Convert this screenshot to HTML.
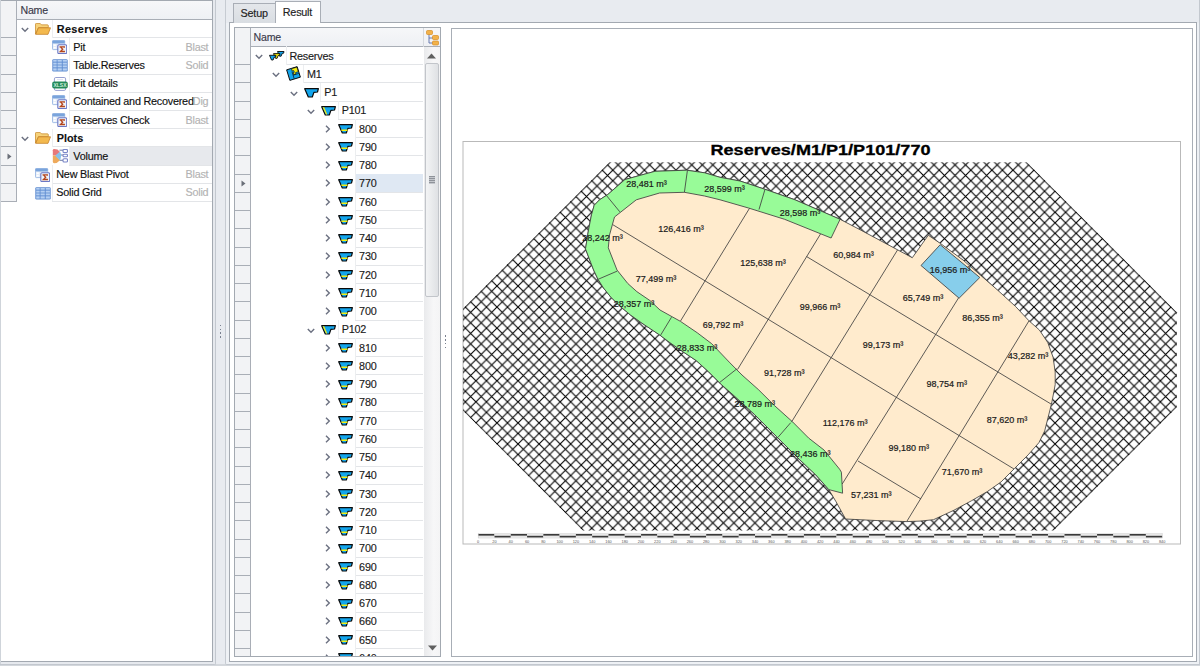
<!DOCTYPE html>
<html><head><meta charset="utf-8"><style>
html,body{margin:0;padding:0;}
body{width:1200px;height:666px;overflow:hidden;position:relative;background:#e8ebf0;font-family:"Liberation Sans",sans-serif;font-size:11px;color:#1e1e1e;}
.a{position:absolute;}
.t{position:absolute;white-space:nowrap;line-height:1;letter-spacing:-0.22px;-webkit-text-stroke:0.15px currentColor;}
</style></head><body>
<div class="a" style="left:0;top:664px;width:1200px;height:2px;background:#d3d7dc"></div><div class="a" style="left:0;top:0;width:216px;height:664.5px;background:#e6e9ee;box-sizing:border-box;border-right:1px solid #c3c8cf;border-bottom:1px solid #c3c8cf;border-bottom-right-radius:2px"></div><div class="a" style="left:0;top:0;width:213px;height:662px;background:#fff;box-sizing:border-box;border:1px solid #a3a9b1;border-left-color:#a3a9b1"></div><div class="a" style="left:0;top:0;width:1px;height:664px;background:#cfd4da"></div><div class="a" style="left:1px;top:1px;width:211px;height:18.5px;background:linear-gradient(#f6f7f9,#eef0f4)"></div><div class="a" style="left:1px;top:19px;width:211px;height:1px;background:#a9aeb6"></div><div class="a" style="left:1px;top:1px;width:15.5px;height:201px;background:#f2f3f5"></div><div class="a" style="left:16px;top:1px;width:1px;height:201px;background:#a9aeb6"></div><div class="t" style="left:20.5px;top:4.9px;font-size:10.6px;color:#3a3a4a">Name</div><div class="a" style="left:1px;top:37.20px;width:15.5px;height:1px;background:#a9aeb6"></div><div class="a" style="left:51.8px;top:37.20px;width:160.2px;height:1px;background:#e3e5e8"></div><div class="a" style="left:51.8px;top:19.50px;width:1px;height:18.20px;background:#eceef0"></div><svg style="position:absolute;left:21.0px;top:27.0px" width="8" height="6" viewBox="0 0 8 6"><path d="M0.8 1 L4 4.3 L7.2 1" fill="none" stroke="#6b7080" stroke-width="1.4"/></svg><div class="a" style="left:34.8px;top:23.10px;line-height:0"><svg width="16" height="12" viewBox="0 0 16 13" preserveAspectRatio="none"><path d="M0.5 1.2 Q0.5 0.5 1.2 0.5 L5.2 0.5 L6.5 2 L12.5 2 Q13.3 2 13.3 2.8 L13.3 5 L3.5 5 L0.5 12 Z" fill="#f6d27a" stroke="#c98a2e" stroke-width="0.8"/><path d="M0.7 12.3 L3.4 5.2 L15.5 5.2 L13 12.3 Z" fill="#f3b94e" stroke="#c47f24" stroke-width="0.8"/></svg></div><div class="t" style="left:56.8px;top:23.50px;font-size:10.8px;font-weight:bold;color:#111;letter-spacing:0.38px;">Reserves</div><div class="a" style="left:1px;top:55.40px;width:15.5px;height:1px;background:#a9aeb6"></div><div class="a" style="left:69.2px;top:55.40px;width:142.8px;height:1px;background:#e3e5e8"></div><div class="a" style="left:69.2px;top:37.70px;width:1px;height:18.20px;background:#eceef0"></div><div class="a" style="left:52.2px;top:40.10px;line-height:0"><svg width="15" height="14" viewBox="0 0 15 14"><rect x="0.5" y="0.4" width="12.2" height="9.2" rx="0.8" fill="#e6eef9" stroke="#8fb0e0" stroke-width="0.8"/><rect x="0.5" y="0.4" width="12.2" height="3" rx="0.8" fill="#7aa4dc"/><rect x="1.6" y="4.4" width="2.2" height="1.6" fill="#fff"/><rect x="1.6" y="7" width="2.2" height="1.6" fill="#fff"/><rect x="5.8" y="4.8" width="8.9" height="8.8" rx="1.2" fill="#eef3fa" stroke="#6c78c4" stroke-width="1.1"/><path d="M8.2 7.6 L8.2 6.9 L12.3 6.9 L12.3 7.7 M8.4 6.9 L10.7 9.2 L8.4 11.5 L12.3 11.5 L12.3 10.7" fill="none" stroke="#b5451b" stroke-width="1.3"/></svg></div><div class="t" style="left:73.3px;top:41.70px;font-size:10.8px;font-weight:normal;color:#111;">Pit</div><div class="t" style="right:991.6px;top:41.70px;font-size:10.8px;color:#b3b3b3">Blast</div><div class="a" style="left:1px;top:73.60px;width:15.5px;height:1px;background:#a9aeb6"></div><div class="a" style="left:69.2px;top:73.60px;width:142.8px;height:1px;background:#e3e5e8"></div><div class="a" style="left:69.2px;top:55.90px;width:1px;height:18.20px;background:#eceef0"></div><div class="a" style="left:52.2px;top:59.30px;line-height:0"><svg width="16" height="13" viewBox="0 0 16 13"><rect x="0.3" y="0.2" width="15.4" height="12.4" rx="1.3" fill="#5d8bd0"/><rect x="1.2" y="1.0" width="3.5" height="1.7" fill="#b4cff2"/><rect x="1.2" y="3.6" width="3.5" height="2.0" fill="#b4cff2"/><rect x="1.2" y="6.4" width="3.5" height="2.0" fill="#b4cff2"/><rect x="1.2" y="9.3" width="3.5" height="2.3" fill="#b4cff2"/><rect x="5.5" y="1.0" width="4.3" height="1.7" fill="#b4cff2"/><rect x="5.5" y="3.6" width="4.3" height="2.0" fill="#b4cff2"/><rect x="5.5" y="6.4" width="4.3" height="2.0" fill="#b4cff2"/><rect x="5.5" y="9.3" width="4.3" height="2.3" fill="#b4cff2"/><rect x="10.7" y="1.0" width="4.2" height="1.7" fill="#b4cff2"/><rect x="10.7" y="3.6" width="4.2" height="2.0" fill="#b4cff2"/><rect x="10.7" y="6.4" width="4.2" height="2.0" fill="#b4cff2"/><rect x="10.7" y="9.3" width="4.2" height="2.3" fill="#b4cff2"/></svg></div><div class="t" style="left:73.3px;top:59.90px;font-size:10.8px;font-weight:normal;color:#111;">Table.Reserves</div><div class="t" style="right:991.6px;top:59.90px;font-size:10.8px;color:#b3b3b3">Solid</div><div class="a" style="left:1px;top:91.80px;width:15.5px;height:1px;background:#a9aeb6"></div><div class="a" style="left:69.2px;top:91.80px;width:142.8px;height:1px;background:#e3e5e8"></div><div class="a" style="left:69.2px;top:74.10px;width:1px;height:18.20px;background:#eceef0"></div><div class="a" style="left:52.2px;top:76.60px;line-height:0"><svg width="16" height="14" viewBox="0 0 16 14"><rect x="2.4" y="0.5" width="11.2" height="12.9" rx="1.4" fill="#fff" stroke="#8a95cc" stroke-width="0.9"/><line x1="5" y1="2.6" x2="11" y2="2.6" stroke="#c9cfe8" stroke-width="0.6"/><rect x="0.2" y="4.6" width="15.6" height="6.8" rx="2" fill="#23895a"/><text x="8" y="10.1" font-size="5.4" font-family="Liberation Sans" font-weight="bold" fill="#cfeedd" text-anchor="middle" textLength="13" lengthAdjust="spacingAndGlyphs">XLSX</text></svg></div><div class="t" style="left:73.3px;top:78.10px;font-size:10.8px;font-weight:normal;color:#111;">Pit details</div><div class="a" style="left:1px;top:110.00px;width:15.5px;height:1px;background:#a9aeb6"></div><div class="a" style="left:69.2px;top:110.00px;width:142.8px;height:1px;background:#e3e5e8"></div><div class="a" style="left:69.2px;top:92.30px;width:1px;height:18.20px;background:#eceef0"></div><div class="a" style="left:52.2px;top:94.70px;line-height:0"><svg width="15" height="14" viewBox="0 0 15 14"><rect x="0.5" y="0.4" width="12.2" height="9.2" rx="0.8" fill="#e6eef9" stroke="#8fb0e0" stroke-width="0.8"/><rect x="0.5" y="0.4" width="12.2" height="3" rx="0.8" fill="#7aa4dc"/><rect x="1.6" y="4.4" width="2.2" height="1.6" fill="#fff"/><rect x="1.6" y="7" width="2.2" height="1.6" fill="#fff"/><rect x="5.8" y="4.8" width="8.9" height="8.8" rx="1.2" fill="#eef3fa" stroke="#6c78c4" stroke-width="1.1"/><path d="M8.2 7.6 L8.2 6.9 L12.3 6.9 L12.3 7.7 M8.4 6.9 L10.7 9.2 L8.4 11.5 L12.3 11.5 L12.3 10.7" fill="none" stroke="#b5451b" stroke-width="1.3"/></svg></div><div class="t" style="left:73.3px;top:96.30px;font-size:10.8px;font-weight:normal;color:#111;">Contained and Recovered</div><div class="t" style="right:991.6px;top:96.30px;font-size:10.8px;color:#b3b3b3">Dig</div><div class="a" style="left:1px;top:128.20px;width:15.5px;height:1px;background:#a9aeb6"></div><div class="a" style="left:69.2px;top:128.20px;width:142.8px;height:1px;background:#e3e5e8"></div><div class="a" style="left:69.2px;top:110.50px;width:1px;height:18.20px;background:#eceef0"></div><div class="a" style="left:52.2px;top:112.90px;line-height:0"><svg width="15" height="14" viewBox="0 0 15 14"><rect x="0.5" y="0.4" width="12.2" height="9.2" rx="0.8" fill="#e6eef9" stroke="#8fb0e0" stroke-width="0.8"/><rect x="0.5" y="0.4" width="12.2" height="3" rx="0.8" fill="#7aa4dc"/><rect x="1.6" y="4.4" width="2.2" height="1.6" fill="#fff"/><rect x="1.6" y="7" width="2.2" height="1.6" fill="#fff"/><rect x="5.8" y="4.8" width="8.9" height="8.8" rx="1.2" fill="#eef3fa" stroke="#6c78c4" stroke-width="1.1"/><path d="M8.2 7.6 L8.2 6.9 L12.3 6.9 L12.3 7.7 M8.4 6.9 L10.7 9.2 L8.4 11.5 L12.3 11.5 L12.3 10.7" fill="none" stroke="#b5451b" stroke-width="1.3"/></svg></div><div class="t" style="left:73.3px;top:114.50px;font-size:10.8px;font-weight:normal;color:#111;">Reserves Check</div><div class="t" style="right:991.6px;top:114.50px;font-size:10.8px;color:#b3b3b3">Blast</div><div class="a" style="left:1px;top:146.40px;width:15.5px;height:1px;background:#a9aeb6"></div><div class="a" style="left:51.8px;top:146.40px;width:160.2px;height:1px;background:#e3e5e8"></div><div class="a" style="left:51.8px;top:128.70px;width:1px;height:18.20px;background:#eceef0"></div><svg style="position:absolute;left:21.0px;top:136.2px" width="8" height="6" viewBox="0 0 8 6"><path d="M0.8 1 L4 4.3 L7.2 1" fill="none" stroke="#6b7080" stroke-width="1.4"/></svg><div class="a" style="left:34.8px;top:132.30px;line-height:0"><svg width="16" height="12" viewBox="0 0 16 13" preserveAspectRatio="none"><path d="M0.5 1.2 Q0.5 0.5 1.2 0.5 L5.2 0.5 L6.5 2 L12.5 2 Q13.3 2 13.3 2.8 L13.3 5 L3.5 5 L0.5 12 Z" fill="#f6d27a" stroke="#c98a2e" stroke-width="0.8"/><path d="M0.7 12.3 L3.4 5.2 L15.5 5.2 L13 12.3 Z" fill="#f3b94e" stroke="#c47f24" stroke-width="0.8"/></svg></div><div class="t" style="left:56.8px;top:132.70px;font-size:10.8px;font-weight:bold;color:#111;letter-spacing:0px;">Plots</div><div class="a" style="left:1px;top:164.60px;width:15.5px;height:1px;background:#a9aeb6"></div><div class="a" style="left:69.2px;top:147.10px;width:142.8px;height:17.70px;background:#e7e9ed"></div><svg class="a" style="left:7px;top:153.40px" width="5" height="7" viewBox="0 0 5 7"><path d="M0.5 0.5 L4.5 3.5 L0.5 6.5 Z" fill="#6a6f78"/></svg><div class="a" style="left:69.2px;top:164.60px;width:142.8px;height:1px;background:#e3e5e8"></div><div class="a" style="left:69.2px;top:146.90px;width:1px;height:18.20px;background:#eceef0"></div><div class="a" style="left:52.2px;top:148.90px;line-height:0"><svg width="16" height="15" viewBox="0 0 16 15"><path d="M7.5 1.2 L11 1.2 M8.2 6.0 L11 6.0 M7.5 11.3 L11 11.3" stroke="#4a5a8a" stroke-width="0.8"/><path d="M0.8 1.2 Q0.8 0 2.2 0 L5.5 0.5 L8 3 L4 6.6 L0.8 6.6 Z" fill="#e7787a"/><path d="M0.8 6.6 L4 6.6 L8 11.2 Q5.5 14.2 2.2 14.2 Q0.8 14.2 0.8 12.8 Z" fill="#eeaa5c"/><path d="M3.2 6.8 L8 2.6 Q10 6.8 8 11.4 Z" fill="#86c0ea"/><rect x="11" y="0.5" width="4.5" height="3" rx="1" fill="#fff" stroke="#7a86c8" stroke-width="1.1"/><rect x="11" y="5.2" width="4.5" height="2.6" rx="1" fill="#fff" stroke="#7a86c8" stroke-width="1.1"/><rect x="11" y="9.8" width="4.5" height="3.2" rx="1" fill="#fff" stroke="#7a86c8" stroke-width="1.1"/></svg></div><div class="t" style="left:73.3px;top:150.90px;font-size:10.8px;font-weight:normal;color:#111;">Volume</div><div class="a" style="left:1px;top:182.80px;width:15.5px;height:1px;background:#a9aeb6"></div><div class="a" style="left:51.6px;top:182.80px;width:160.4px;height:1px;background:#e3e5e8"></div><div class="a" style="left:51.6px;top:165.10px;width:1px;height:18.20px;background:#eceef0"></div><div class="a" style="left:35.2px;top:167.50px;line-height:0"><svg width="15" height="14" viewBox="0 0 15 14"><rect x="0.5" y="0.4" width="12.2" height="9.2" rx="0.8" fill="#e6eef9" stroke="#8fb0e0" stroke-width="0.8"/><rect x="0.5" y="0.4" width="12.2" height="3" rx="0.8" fill="#7aa4dc"/><rect x="1.6" y="4.4" width="2.2" height="1.6" fill="#fff"/><rect x="1.6" y="7" width="2.2" height="1.6" fill="#fff"/><rect x="5.8" y="4.8" width="8.9" height="8.8" rx="1.2" fill="#eef3fa" stroke="#6c78c4" stroke-width="1.1"/><path d="M8.2 7.6 L8.2 6.9 L12.3 6.9 L12.3 7.7 M8.4 6.9 L10.7 9.2 L8.4 11.5 L12.3 11.5 L12.3 10.7" fill="none" stroke="#b5451b" stroke-width="1.3"/></svg></div><div class="t" style="left:56.3px;top:169.10px;font-size:10.8px;font-weight:normal;color:#111;">New Blast Pivot</div><div class="t" style="right:991.6px;top:169.10px;font-size:10.8px;color:#b3b3b3">Blast</div><div class="a" style="left:1px;top:201.00px;width:15.5px;height:1px;background:#a9aeb6"></div><div class="a" style="left:51.6px;top:201.00px;width:160.4px;height:1px;background:#e3e5e8"></div><div class="a" style="left:51.6px;top:183.30px;width:1px;height:18.20px;background:#eceef0"></div><div class="a" style="left:35.2px;top:186.70px;line-height:0"><svg width="16" height="13" viewBox="0 0 16 13"><rect x="0.3" y="0.2" width="15.4" height="12.4" rx="1.3" fill="#5d8bd0"/><rect x="1.2" y="1.0" width="3.5" height="1.7" fill="#b4cff2"/><rect x="1.2" y="3.6" width="3.5" height="2.0" fill="#b4cff2"/><rect x="1.2" y="6.4" width="3.5" height="2.0" fill="#b4cff2"/><rect x="1.2" y="9.3" width="3.5" height="2.3" fill="#b4cff2"/><rect x="5.5" y="1.0" width="4.3" height="1.7" fill="#b4cff2"/><rect x="5.5" y="3.6" width="4.3" height="2.0" fill="#b4cff2"/><rect x="5.5" y="6.4" width="4.3" height="2.0" fill="#b4cff2"/><rect x="5.5" y="9.3" width="4.3" height="2.3" fill="#b4cff2"/><rect x="10.7" y="1.0" width="4.2" height="1.7" fill="#b4cff2"/><rect x="10.7" y="3.6" width="4.2" height="2.0" fill="#b4cff2"/><rect x="10.7" y="6.4" width="4.2" height="2.0" fill="#b4cff2"/><rect x="10.7" y="9.3" width="4.2" height="2.3" fill="#b4cff2"/></svg></div><div class="t" style="left:56.3px;top:187.30px;font-size:10.8px;font-weight:normal;color:#111;">Solid Grid</div><div class="t" style="right:991.6px;top:187.30px;font-size:10.8px;color:#b3b3b3">Solid</div><div class="a" style="left:219.95px;top:324.75px;width:1.5px;height:1.5px;background:#7a8190"></div><div class="a" style="left:219.95px;top:328.60px;width:1.5px;height:1.5px;background:#7a8190"></div><div class="a" style="left:219.95px;top:332.45px;width:1.5px;height:1.5px;background:#7a8190"></div><div class="a" style="left:219.95px;top:336.30px;width:1.5px;height:1.5px;background:#7a8190"></div><div class="a" style="left:225px;top:0;width:975px;height:664.5px;background:#eef1f5;box-sizing:border-box;border-left:1px solid #c6cbd2;border-bottom:1px solid #c3c8cf;border-right:1px solid #c3c8cf;border-bottom-left-radius:2px"></div><div class="a" style="left:226px;top:0;width:973px;height:22.5px;background:#e8ebf0"></div><div class="a" style="left:229px;top:22px;width:968px;height:640px;background:#fff;box-sizing:border-box;border:1px solid #a3a9b1"></div><div class="a" style="left:233px;top:3px;width:42.5px;height:19.5px;background:linear-gradient(#e4e7eb,#d9dde2);box-sizing:border-box;border:1px solid #a9aeb6;border-bottom:none"></div><div class="t" style="left:240.6px;top:7.6px;font-size:10.8px;color:#222">Setup</div><div class="a" style="left:275px;top:1.2px;width:46px;height:22px;background:#fff;box-sizing:border-box;border:1px solid #a9aeb6;border-bottom:none"></div><div class="t" style="left:282.8px;top:7.2px;font-size:10.8px;color:#222">Result</div><div class="a" style="left:234px;top:27px;width:206.5px;height:629.5px;background:#fff;box-sizing:border-box;border:1px solid #a3a9b1;overflow:hidden"><div class="a" style="left:0;top:0;width:204.5px;height:18.5px;background:linear-gradient(#f6f7f9,#eef0f4)"></div><div class="a" style="left:0;top:17.80px;width:204.5px;height:1px;background:#a9aeb6"></div><div class="a" style="left:0;top:0;width:14.50px;height:640px;background:#f2f3f5"></div><div class="a" style="left:14.50px;top:0;width:1px;height:640px;background:#a9aeb6"></div><div class="t" style="left:18.60px;top:3.80px;font-size:10.6px;color:#3a3a4a">Name</div><div class="a" style="left:188.00px;top:0;width:1px;height:18.5px;background:#d5d9de"></div><div class="a" style="left:191.00px;top:1.50px;line-height:0"><svg width="13" height="16" viewBox="0 0 13 16"><path d="M3 4 L3 13 L7 13 M3 8 L7 8" fill="none" stroke="#5a6ea8" stroke-width="0.9"/><rect x="0.5" y="0.5" width="6" height="4" rx="1" fill="#f2b24a" stroke="#d78d22" stroke-width="0.7"/><rect x="6.5" y="5.5" width="6" height="4" rx="1" fill="#f2b24a" stroke="#d78d22" stroke-width="0.7"/><rect x="6.5" y="11" width="6" height="4" rx="1" fill="#f2b24a" stroke="#d78d22" stroke-width="0.7"/></svg></div><div class="a" style="left:0;top:36.05px;width:14.50px;height:1px;background:#a9aeb6"></div><div class="a" style="left:50.50px;top:36.05px;width:137.50px;height:1px;background:#e3e5e8"></div><div class="a" style="left:50.50px;top:18.30px;width:1px;height:18.25px;background:#eceef0"></div><svg style="position:absolute;left:20.0px;top:26.099999999999998px" width="8" height="6" viewBox="0 0 8 6"><path d="M0.8 1 L4 4.3 L7.2 1" fill="none" stroke="#6b7080" stroke-width="1.4"/></svg><div class="a" style="left:33.60px;top:22.90px;line-height:0"><svg width="16" height="11" viewBox="0 0 16 11"><path transform="translate(8,0)" d="M0.5 0.5 L7 0.5 L6.6 2.2 L5.2 2.4 L4.1 5.2 L2.5 5.2 Z" fill="#12a5ec" stroke="#0a0a0a" stroke-width="0.9" stroke-linejoin="round"/><path transform="translate(4,2.1)" d="M0.5 0.5 L7 0.5 L6.6 2.2 L5.2 2.4 L4.1 5.2 L2.5 5.2 Z" fill="#f4ee10" stroke="#0a0a0a" stroke-width="0.9" stroke-linejoin="round"/><path transform="translate(0,3.8)" d="M0.5 0.5 L7 0.5 L6.6 2.2 L5.2 2.4 L4.1 5.2 L2.5 5.2 Z" fill="#12a5ec" stroke="#0a0a0a" stroke-width="0.9" stroke-linejoin="round"/></svg></div><div class="t" style="left:54.50px;top:22.60px;font-size:10.8px;color:#1a1a1a">Reserves</div><div class="a" style="left:0;top:54.30px;width:14.50px;height:1px;background:#a9aeb6"></div><div class="a" style="left:67.90px;top:54.30px;width:120.10px;height:1px;background:#e3e5e8"></div><div class="a" style="left:67.90px;top:36.55px;width:1px;height:18.25px;background:#eceef0"></div><svg style="position:absolute;left:37.39999999999998px;top:44.349999999999994px" width="8" height="6" viewBox="0 0 8 6"><path d="M0.8 1 L4 4.3 L7.2 1" fill="none" stroke="#6b7080" stroke-width="1.4"/></svg><div class="a" style="left:50.80px;top:38.45px;line-height:0"><svg width="15" height="15" viewBox="0 0 15 15"><g transform="rotate(-17 7.5 7.5)"><rect x="2" y="2" width="11" height="11" fill="#12a5ec" stroke="#0a0a0a" stroke-width="0.9"/><path d="M7 2.4 L12.6 2.4 L12.6 7.2 L9.8 7.2 L9.8 8.6 L7.4 8.6 L7.4 6.6 L8.6 6.6 L8.6 4.8 L7 4.8 Z" fill="#f4ee10" stroke="#0a0a0a" stroke-width="0.6"/><path d="M6.6 5.2 L6.6 12.6 M6.6 9 L12.6 9" stroke="#0a0a0a" stroke-width="0.6"/></g></svg></div><div class="t" style="left:71.90px;top:40.85px;font-size:10.8px;color:#1a1a1a">M1</div><div class="a" style="left:0;top:72.55px;width:14.50px;height:1px;background:#a9aeb6"></div><div class="a" style="left:85.30px;top:72.55px;width:102.70px;height:1px;background:#e3e5e8"></div><div class="a" style="left:85.30px;top:54.80px;width:1px;height:18.25px;background:#eceef0"></div><svg style="position:absolute;left:54.80000000000001px;top:62.599999999999994px" width="8" height="6" viewBox="0 0 8 6"><path d="M0.8 1 L4 4.3 L7.2 1" fill="none" stroke="#6b7080" stroke-width="1.4"/></svg><div class="a" style="left:68.60px;top:59.60px;line-height:0"><svg width="15" height="10" viewBox="0 0 15 10"><path d="M0.7 0.7 L14.4 0.7 L13.5 4.0 L9.9 4.4 L8.3 9.0 L4.3 9.0 Z" fill="#12a5ec" stroke="#0a0a0a" stroke-width="1.2" stroke-linejoin="round"/></svg></div><div class="t" style="left:89.30px;top:59.10px;font-size:10.8px;color:#1a1a1a">P1</div><div class="a" style="left:0;top:90.80px;width:14.50px;height:1px;background:#a9aeb6"></div><div class="a" style="left:102.70px;top:90.80px;width:85.30px;height:1px;background:#e3e5e8"></div><div class="a" style="left:102.70px;top:73.05px;width:1px;height:18.25px;background:#eceef0"></div><svg style="position:absolute;left:72.19999999999999px;top:80.85px" width="8" height="6" viewBox="0 0 8 6"><path d="M0.8 1 L4 4.3 L7.2 1" fill="none" stroke="#6b7080" stroke-width="1.4"/></svg><div class="a" style="left:86.00px;top:77.85px;line-height:0"><svg width="15" height="10" viewBox="0 0 15 10"><path d="M0.7 0.7 L14.4 0.7 L13.5 4.0 L9.9 4.4 L8.3 9.0 L4.3 9.0 Z" fill="#12a5ec" stroke="#0a0a0a" stroke-width="1.2" stroke-linejoin="round"/><path d="M1.6 1.3 L3.2 1.3 L6.3 8.4 L5.0 8.4 Z" fill="#f4ee10"/></svg></div><div class="t" style="left:106.70px;top:77.35px;font-size:10.8px;color:#1a1a1a">P101</div><div class="a" style="left:0;top:109.05px;width:14.50px;height:1px;background:#a9aeb6"></div><div class="a" style="left:120.10px;top:109.05px;width:67.90px;height:1px;background:#e3e5e8"></div><div class="a" style="left:120.10px;top:91.30px;width:1px;height:18.25px;background:#eceef0"></div><svg style="position:absolute;left:90.19999999999999px;top:96.6px" width="6" height="8" viewBox="0 0 6 8"><path d="M1 0.8 L4.3 4 L1 7.2" fill="none" stroke="#6b7080" stroke-width="1.4"/></svg><div class="a" style="left:103.40px;top:96.10px;line-height:0"><svg width="15" height="10" viewBox="0 0 15 10"><path d="M0.7 0.7 L14.4 0.7 L13.5 4.0 L9.9 4.4 L8.3 9.0 L4.3 9.0 Z" fill="#12a5ec" stroke="#0a0a0a" stroke-width="1.2" stroke-linejoin="round"/><path d="M3.1 5.4 L9.8 5.4 L9.3 6.9 L3.6 6.9 Z" fill="#f4ee10"/></svg></div><div class="t" style="left:124.10px;top:95.60px;font-size:10.8px;color:#1a1a1a">800</div><div class="a" style="left:0;top:127.30px;width:14.50px;height:1px;background:#a9aeb6"></div><div class="a" style="left:120.10px;top:127.30px;width:67.90px;height:1px;background:#e3e5e8"></div><div class="a" style="left:120.10px;top:109.55px;width:1px;height:18.25px;background:#eceef0"></div><svg style="position:absolute;left:90.19999999999999px;top:114.85000000000001px" width="6" height="8" viewBox="0 0 6 8"><path d="M1 0.8 L4.3 4 L1 7.2" fill="none" stroke="#6b7080" stroke-width="1.4"/></svg><div class="a" style="left:103.40px;top:114.35px;line-height:0"><svg width="15" height="10" viewBox="0 0 15 10"><path d="M0.7 0.7 L14.4 0.7 L13.5 4.0 L9.9 4.4 L8.3 9.0 L4.3 9.0 Z" fill="#12a5ec" stroke="#0a0a0a" stroke-width="1.2" stroke-linejoin="round"/><path d="M3.1 5.4 L9.8 5.4 L9.3 6.9 L3.6 6.9 Z" fill="#f4ee10"/></svg></div><div class="t" style="left:124.10px;top:113.85px;font-size:10.8px;color:#1a1a1a">790</div><div class="a" style="left:0;top:145.55px;width:14.50px;height:1px;background:#a9aeb6"></div><div class="a" style="left:120.10px;top:145.55px;width:67.90px;height:1px;background:#e3e5e8"></div><div class="a" style="left:120.10px;top:127.80px;width:1px;height:18.25px;background:#eceef0"></div><svg style="position:absolute;left:90.19999999999999px;top:133.10000000000002px" width="6" height="8" viewBox="0 0 6 8"><path d="M1 0.8 L4.3 4 L1 7.2" fill="none" stroke="#6b7080" stroke-width="1.4"/></svg><div class="a" style="left:103.40px;top:132.60px;line-height:0"><svg width="15" height="10" viewBox="0 0 15 10"><path d="M0.7 0.7 L14.4 0.7 L13.5 4.0 L9.9 4.4 L8.3 9.0 L4.3 9.0 Z" fill="#12a5ec" stroke="#0a0a0a" stroke-width="1.2" stroke-linejoin="round"/><path d="M3.1 5.4 L9.8 5.4 L9.3 6.9 L3.6 6.9 Z" fill="#f4ee10"/></svg></div><div class="t" style="left:124.10px;top:132.10px;font-size:10.8px;color:#1a1a1a">780</div><div class="a" style="left:0;top:163.80px;width:14.50px;height:1px;background:#a9aeb6"></div><div class="a" style="left:120.10px;top:146.05px;width:67.90px;height:17.75px;background:#dfe8f3"></div><svg class="a" style="left:6px;top:152.35px" width="5" height="7" viewBox="0 0 5 7"><path d="M0.5 0.5 L4.5 3.5 L0.5 6.5 Z" fill="#6a6f78"/></svg><div class="a" style="left:120.10px;top:163.80px;width:67.90px;height:1px;background:#e3e5e8"></div><div class="a" style="left:120.10px;top:146.05px;width:1px;height:18.25px;background:#eceef0"></div><svg style="position:absolute;left:90.19999999999999px;top:151.35000000000002px" width="6" height="8" viewBox="0 0 6 8"><path d="M1 0.8 L4.3 4 L1 7.2" fill="none" stroke="#6b7080" stroke-width="1.4"/></svg><div class="a" style="left:103.40px;top:150.85px;line-height:0"><svg width="15" height="10" viewBox="0 0 15 10"><path d="M0.7 0.7 L14.4 0.7 L13.5 4.0 L9.9 4.4 L8.3 9.0 L4.3 9.0 Z" fill="#12a5ec" stroke="#0a0a0a" stroke-width="1.2" stroke-linejoin="round"/><path d="M3.1 5.4 L9.8 5.4 L9.3 6.9 L3.6 6.9 Z" fill="#f4ee10"/></svg></div><div class="t" style="left:124.10px;top:150.35px;font-size:10.8px;color:#1a1a1a">770</div><div class="a" style="left:0;top:182.05px;width:14.50px;height:1px;background:#a9aeb6"></div><div class="a" style="left:120.10px;top:182.05px;width:67.90px;height:1px;background:#e3e5e8"></div><div class="a" style="left:120.10px;top:164.30px;width:1px;height:18.25px;background:#eceef0"></div><svg style="position:absolute;left:90.19999999999999px;top:169.60000000000002px" width="6" height="8" viewBox="0 0 6 8"><path d="M1 0.8 L4.3 4 L1 7.2" fill="none" stroke="#6b7080" stroke-width="1.4"/></svg><div class="a" style="left:103.40px;top:169.10px;line-height:0"><svg width="15" height="10" viewBox="0 0 15 10"><path d="M0.7 0.7 L14.4 0.7 L13.5 4.0 L9.9 4.4 L8.3 9.0 L4.3 9.0 Z" fill="#12a5ec" stroke="#0a0a0a" stroke-width="1.2" stroke-linejoin="round"/><path d="M3.1 5.4 L9.8 5.4 L9.3 6.9 L3.6 6.9 Z" fill="#f4ee10"/></svg></div><div class="t" style="left:124.10px;top:168.60px;font-size:10.8px;color:#1a1a1a">760</div><div class="a" style="left:0;top:200.30px;width:14.50px;height:1px;background:#a9aeb6"></div><div class="a" style="left:120.10px;top:200.30px;width:67.90px;height:1px;background:#e3e5e8"></div><div class="a" style="left:120.10px;top:182.55px;width:1px;height:18.25px;background:#eceef0"></div><svg style="position:absolute;left:90.19999999999999px;top:187.85000000000002px" width="6" height="8" viewBox="0 0 6 8"><path d="M1 0.8 L4.3 4 L1 7.2" fill="none" stroke="#6b7080" stroke-width="1.4"/></svg><div class="a" style="left:103.40px;top:187.35px;line-height:0"><svg width="15" height="10" viewBox="0 0 15 10"><path d="M0.7 0.7 L14.4 0.7 L13.5 4.0 L9.9 4.4 L8.3 9.0 L4.3 9.0 Z" fill="#12a5ec" stroke="#0a0a0a" stroke-width="1.2" stroke-linejoin="round"/><path d="M3.1 5.4 L9.8 5.4 L9.3 6.9 L3.6 6.9 Z" fill="#f4ee10"/></svg></div><div class="t" style="left:124.10px;top:186.85px;font-size:10.8px;color:#1a1a1a">750</div><div class="a" style="left:0;top:218.55px;width:14.50px;height:1px;background:#a9aeb6"></div><div class="a" style="left:120.10px;top:218.55px;width:67.90px;height:1px;background:#e3e5e8"></div><div class="a" style="left:120.10px;top:200.80px;width:1px;height:18.25px;background:#eceef0"></div><svg style="position:absolute;left:90.19999999999999px;top:206.10000000000002px" width="6" height="8" viewBox="0 0 6 8"><path d="M1 0.8 L4.3 4 L1 7.2" fill="none" stroke="#6b7080" stroke-width="1.4"/></svg><div class="a" style="left:103.40px;top:205.60px;line-height:0"><svg width="15" height="10" viewBox="0 0 15 10"><path d="M0.7 0.7 L14.4 0.7 L13.5 4.0 L9.9 4.4 L8.3 9.0 L4.3 9.0 Z" fill="#12a5ec" stroke="#0a0a0a" stroke-width="1.2" stroke-linejoin="round"/><path d="M3.1 5.4 L9.8 5.4 L9.3 6.9 L3.6 6.9 Z" fill="#f4ee10"/></svg></div><div class="t" style="left:124.10px;top:205.10px;font-size:10.8px;color:#1a1a1a">740</div><div class="a" style="left:0;top:236.80px;width:14.50px;height:1px;background:#a9aeb6"></div><div class="a" style="left:120.10px;top:236.80px;width:67.90px;height:1px;background:#e3e5e8"></div><div class="a" style="left:120.10px;top:219.05px;width:1px;height:18.25px;background:#eceef0"></div><svg style="position:absolute;left:90.19999999999999px;top:224.35000000000002px" width="6" height="8" viewBox="0 0 6 8"><path d="M1 0.8 L4.3 4 L1 7.2" fill="none" stroke="#6b7080" stroke-width="1.4"/></svg><div class="a" style="left:103.40px;top:223.85px;line-height:0"><svg width="15" height="10" viewBox="0 0 15 10"><path d="M0.7 0.7 L14.4 0.7 L13.5 4.0 L9.9 4.4 L8.3 9.0 L4.3 9.0 Z" fill="#12a5ec" stroke="#0a0a0a" stroke-width="1.2" stroke-linejoin="round"/><path d="M3.1 5.4 L9.8 5.4 L9.3 6.9 L3.6 6.9 Z" fill="#f4ee10"/></svg></div><div class="t" style="left:124.10px;top:223.35px;font-size:10.8px;color:#1a1a1a">730</div><div class="a" style="left:0;top:255.05px;width:14.50px;height:1px;background:#a9aeb6"></div><div class="a" style="left:120.10px;top:255.05px;width:67.90px;height:1px;background:#e3e5e8"></div><div class="a" style="left:120.10px;top:237.30px;width:1px;height:18.25px;background:#eceef0"></div><svg style="position:absolute;left:90.19999999999999px;top:242.60000000000002px" width="6" height="8" viewBox="0 0 6 8"><path d="M1 0.8 L4.3 4 L1 7.2" fill="none" stroke="#6b7080" stroke-width="1.4"/></svg><div class="a" style="left:103.40px;top:242.10px;line-height:0"><svg width="15" height="10" viewBox="0 0 15 10"><path d="M0.7 0.7 L14.4 0.7 L13.5 4.0 L9.9 4.4 L8.3 9.0 L4.3 9.0 Z" fill="#12a5ec" stroke="#0a0a0a" stroke-width="1.2" stroke-linejoin="round"/><path d="M3.1 5.4 L9.8 5.4 L9.3 6.9 L3.6 6.9 Z" fill="#f4ee10"/></svg></div><div class="t" style="left:124.10px;top:241.60px;font-size:10.8px;color:#1a1a1a">720</div><div class="a" style="left:0;top:273.30px;width:14.50px;height:1px;background:#a9aeb6"></div><div class="a" style="left:120.10px;top:273.30px;width:67.90px;height:1px;background:#e3e5e8"></div><div class="a" style="left:120.10px;top:255.55px;width:1px;height:18.25px;background:#eceef0"></div><svg style="position:absolute;left:90.19999999999999px;top:260.85px" width="6" height="8" viewBox="0 0 6 8"><path d="M1 0.8 L4.3 4 L1 7.2" fill="none" stroke="#6b7080" stroke-width="1.4"/></svg><div class="a" style="left:103.40px;top:260.35px;line-height:0"><svg width="15" height="10" viewBox="0 0 15 10"><path d="M0.7 0.7 L14.4 0.7 L13.5 4.0 L9.9 4.4 L8.3 9.0 L4.3 9.0 Z" fill="#12a5ec" stroke="#0a0a0a" stroke-width="1.2" stroke-linejoin="round"/><path d="M3.1 5.4 L9.8 5.4 L9.3 6.9 L3.6 6.9 Z" fill="#f4ee10"/></svg></div><div class="t" style="left:124.10px;top:259.85px;font-size:10.8px;color:#1a1a1a">710</div><div class="a" style="left:0;top:291.55px;width:14.50px;height:1px;background:#a9aeb6"></div><div class="a" style="left:120.10px;top:291.55px;width:67.90px;height:1px;background:#e3e5e8"></div><div class="a" style="left:120.10px;top:273.80px;width:1px;height:18.25px;background:#eceef0"></div><svg style="position:absolute;left:90.19999999999999px;top:279.1px" width="6" height="8" viewBox="0 0 6 8"><path d="M1 0.8 L4.3 4 L1 7.2" fill="none" stroke="#6b7080" stroke-width="1.4"/></svg><div class="a" style="left:103.40px;top:278.60px;line-height:0"><svg width="15" height="10" viewBox="0 0 15 10"><path d="M0.7 0.7 L14.4 0.7 L13.5 4.0 L9.9 4.4 L8.3 9.0 L4.3 9.0 Z" fill="#12a5ec" stroke="#0a0a0a" stroke-width="1.2" stroke-linejoin="round"/><path d="M3.1 5.4 L9.8 5.4 L9.3 6.9 L3.6 6.9 Z" fill="#f4ee10"/></svg></div><div class="t" style="left:124.10px;top:278.10px;font-size:10.8px;color:#1a1a1a">700</div><div class="a" style="left:0;top:309.80px;width:14.50px;height:1px;background:#a9aeb6"></div><div class="a" style="left:102.70px;top:309.80px;width:85.30px;height:1px;background:#e3e5e8"></div><div class="a" style="left:102.70px;top:292.05px;width:1px;height:18.25px;background:#eceef0"></div><svg style="position:absolute;left:72.19999999999999px;top:299.85px" width="8" height="6" viewBox="0 0 8 6"><path d="M0.8 1 L4 4.3 L7.2 1" fill="none" stroke="#6b7080" stroke-width="1.4"/></svg><div class="a" style="left:86.00px;top:296.85px;line-height:0"><svg width="15" height="10" viewBox="0 0 15 10"><path d="M0.7 0.7 L14.4 0.7 L13.5 4.0 L9.9 4.4 L8.3 9.0 L4.3 9.0 Z" fill="#12a5ec" stroke="#0a0a0a" stroke-width="1.2" stroke-linejoin="round"/><path d="M1.6 1.3 L3.2 1.3 L6.3 8.4 L5.0 8.4 Z" fill="#f4ee10"/></svg></div><div class="t" style="left:106.70px;top:296.35px;font-size:10.8px;color:#1a1a1a">P102</div><div class="a" style="left:0;top:328.05px;width:14.50px;height:1px;background:#a9aeb6"></div><div class="a" style="left:120.10px;top:328.05px;width:67.90px;height:1px;background:#e3e5e8"></div><div class="a" style="left:120.10px;top:310.30px;width:1px;height:18.25px;background:#eceef0"></div><svg style="position:absolute;left:90.19999999999999px;top:315.6px" width="6" height="8" viewBox="0 0 6 8"><path d="M1 0.8 L4.3 4 L1 7.2" fill="none" stroke="#6b7080" stroke-width="1.4"/></svg><div class="a" style="left:103.40px;top:315.10px;line-height:0"><svg width="15" height="10" viewBox="0 0 15 10"><path d="M0.7 0.7 L14.4 0.7 L13.5 4.0 L9.9 4.4 L8.3 9.0 L4.3 9.0 Z" fill="#12a5ec" stroke="#0a0a0a" stroke-width="1.2" stroke-linejoin="round"/><path d="M3.1 5.4 L9.8 5.4 L9.3 6.9 L3.6 6.9 Z" fill="#f4ee10"/></svg></div><div class="t" style="left:124.10px;top:314.60px;font-size:10.8px;color:#1a1a1a">810</div><div class="a" style="left:0;top:346.30px;width:14.50px;height:1px;background:#a9aeb6"></div><div class="a" style="left:120.10px;top:346.30px;width:67.90px;height:1px;background:#e3e5e8"></div><div class="a" style="left:120.10px;top:328.55px;width:1px;height:18.25px;background:#eceef0"></div><svg style="position:absolute;left:90.19999999999999px;top:333.85px" width="6" height="8" viewBox="0 0 6 8"><path d="M1 0.8 L4.3 4 L1 7.2" fill="none" stroke="#6b7080" stroke-width="1.4"/></svg><div class="a" style="left:103.40px;top:333.35px;line-height:0"><svg width="15" height="10" viewBox="0 0 15 10"><path d="M0.7 0.7 L14.4 0.7 L13.5 4.0 L9.9 4.4 L8.3 9.0 L4.3 9.0 Z" fill="#12a5ec" stroke="#0a0a0a" stroke-width="1.2" stroke-linejoin="round"/><path d="M3.1 5.4 L9.8 5.4 L9.3 6.9 L3.6 6.9 Z" fill="#f4ee10"/></svg></div><div class="t" style="left:124.10px;top:332.85px;font-size:10.8px;color:#1a1a1a">800</div><div class="a" style="left:0;top:364.55px;width:14.50px;height:1px;background:#a9aeb6"></div><div class="a" style="left:120.10px;top:364.55px;width:67.90px;height:1px;background:#e3e5e8"></div><div class="a" style="left:120.10px;top:346.80px;width:1px;height:18.25px;background:#eceef0"></div><svg style="position:absolute;left:90.19999999999999px;top:352.1px" width="6" height="8" viewBox="0 0 6 8"><path d="M1 0.8 L4.3 4 L1 7.2" fill="none" stroke="#6b7080" stroke-width="1.4"/></svg><div class="a" style="left:103.40px;top:351.60px;line-height:0"><svg width="15" height="10" viewBox="0 0 15 10"><path d="M0.7 0.7 L14.4 0.7 L13.5 4.0 L9.9 4.4 L8.3 9.0 L4.3 9.0 Z" fill="#12a5ec" stroke="#0a0a0a" stroke-width="1.2" stroke-linejoin="round"/><path d="M3.1 5.4 L9.8 5.4 L9.3 6.9 L3.6 6.9 Z" fill="#f4ee10"/></svg></div><div class="t" style="left:124.10px;top:351.10px;font-size:10.8px;color:#1a1a1a">790</div><div class="a" style="left:0;top:382.80px;width:14.50px;height:1px;background:#a9aeb6"></div><div class="a" style="left:120.10px;top:382.80px;width:67.90px;height:1px;background:#e3e5e8"></div><div class="a" style="left:120.10px;top:365.05px;width:1px;height:18.25px;background:#eceef0"></div><svg style="position:absolute;left:90.19999999999999px;top:370.35px" width="6" height="8" viewBox="0 0 6 8"><path d="M1 0.8 L4.3 4 L1 7.2" fill="none" stroke="#6b7080" stroke-width="1.4"/></svg><div class="a" style="left:103.40px;top:369.85px;line-height:0"><svg width="15" height="10" viewBox="0 0 15 10"><path d="M0.7 0.7 L14.4 0.7 L13.5 4.0 L9.9 4.4 L8.3 9.0 L4.3 9.0 Z" fill="#12a5ec" stroke="#0a0a0a" stroke-width="1.2" stroke-linejoin="round"/><path d="M3.1 5.4 L9.8 5.4 L9.3 6.9 L3.6 6.9 Z" fill="#f4ee10"/></svg></div><div class="t" style="left:124.10px;top:369.35px;font-size:10.8px;color:#1a1a1a">780</div><div class="a" style="left:0;top:401.05px;width:14.50px;height:1px;background:#a9aeb6"></div><div class="a" style="left:120.10px;top:401.05px;width:67.90px;height:1px;background:#e3e5e8"></div><div class="a" style="left:120.10px;top:383.30px;width:1px;height:18.25px;background:#eceef0"></div><svg style="position:absolute;left:90.19999999999999px;top:388.6px" width="6" height="8" viewBox="0 0 6 8"><path d="M1 0.8 L4.3 4 L1 7.2" fill="none" stroke="#6b7080" stroke-width="1.4"/></svg><div class="a" style="left:103.40px;top:388.10px;line-height:0"><svg width="15" height="10" viewBox="0 0 15 10"><path d="M0.7 0.7 L14.4 0.7 L13.5 4.0 L9.9 4.4 L8.3 9.0 L4.3 9.0 Z" fill="#12a5ec" stroke="#0a0a0a" stroke-width="1.2" stroke-linejoin="round"/><path d="M3.1 5.4 L9.8 5.4 L9.3 6.9 L3.6 6.9 Z" fill="#f4ee10"/></svg></div><div class="t" style="left:124.10px;top:387.60px;font-size:10.8px;color:#1a1a1a">770</div><div class="a" style="left:0;top:419.30px;width:14.50px;height:1px;background:#a9aeb6"></div><div class="a" style="left:120.10px;top:419.30px;width:67.90px;height:1px;background:#e3e5e8"></div><div class="a" style="left:120.10px;top:401.55px;width:1px;height:18.25px;background:#eceef0"></div><svg style="position:absolute;left:90.19999999999999px;top:406.85px" width="6" height="8" viewBox="0 0 6 8"><path d="M1 0.8 L4.3 4 L1 7.2" fill="none" stroke="#6b7080" stroke-width="1.4"/></svg><div class="a" style="left:103.40px;top:406.35px;line-height:0"><svg width="15" height="10" viewBox="0 0 15 10"><path d="M0.7 0.7 L14.4 0.7 L13.5 4.0 L9.9 4.4 L8.3 9.0 L4.3 9.0 Z" fill="#12a5ec" stroke="#0a0a0a" stroke-width="1.2" stroke-linejoin="round"/><path d="M3.1 5.4 L9.8 5.4 L9.3 6.9 L3.6 6.9 Z" fill="#f4ee10"/></svg></div><div class="t" style="left:124.10px;top:405.85px;font-size:10.8px;color:#1a1a1a">760</div><div class="a" style="left:0;top:437.55px;width:14.50px;height:1px;background:#a9aeb6"></div><div class="a" style="left:120.10px;top:437.55px;width:67.90px;height:1px;background:#e3e5e8"></div><div class="a" style="left:120.10px;top:419.80px;width:1px;height:18.25px;background:#eceef0"></div><svg style="position:absolute;left:90.19999999999999px;top:425.1px" width="6" height="8" viewBox="0 0 6 8"><path d="M1 0.8 L4.3 4 L1 7.2" fill="none" stroke="#6b7080" stroke-width="1.4"/></svg><div class="a" style="left:103.40px;top:424.60px;line-height:0"><svg width="15" height="10" viewBox="0 0 15 10"><path d="M0.7 0.7 L14.4 0.7 L13.5 4.0 L9.9 4.4 L8.3 9.0 L4.3 9.0 Z" fill="#12a5ec" stroke="#0a0a0a" stroke-width="1.2" stroke-linejoin="round"/><path d="M3.1 5.4 L9.8 5.4 L9.3 6.9 L3.6 6.9 Z" fill="#f4ee10"/></svg></div><div class="t" style="left:124.10px;top:424.10px;font-size:10.8px;color:#1a1a1a">750</div><div class="a" style="left:0;top:455.80px;width:14.50px;height:1px;background:#a9aeb6"></div><div class="a" style="left:120.10px;top:455.80px;width:67.90px;height:1px;background:#e3e5e8"></div><div class="a" style="left:120.10px;top:438.05px;width:1px;height:18.25px;background:#eceef0"></div><svg style="position:absolute;left:90.19999999999999px;top:443.35px" width="6" height="8" viewBox="0 0 6 8"><path d="M1 0.8 L4.3 4 L1 7.2" fill="none" stroke="#6b7080" stroke-width="1.4"/></svg><div class="a" style="left:103.40px;top:442.85px;line-height:0"><svg width="15" height="10" viewBox="0 0 15 10"><path d="M0.7 0.7 L14.4 0.7 L13.5 4.0 L9.9 4.4 L8.3 9.0 L4.3 9.0 Z" fill="#12a5ec" stroke="#0a0a0a" stroke-width="1.2" stroke-linejoin="round"/><path d="M3.1 5.4 L9.8 5.4 L9.3 6.9 L3.6 6.9 Z" fill="#f4ee10"/></svg></div><div class="t" style="left:124.10px;top:442.35px;font-size:10.8px;color:#1a1a1a">740</div><div class="a" style="left:0;top:474.05px;width:14.50px;height:1px;background:#a9aeb6"></div><div class="a" style="left:120.10px;top:474.05px;width:67.90px;height:1px;background:#e3e5e8"></div><div class="a" style="left:120.10px;top:456.30px;width:1px;height:18.25px;background:#eceef0"></div><svg style="position:absolute;left:90.19999999999999px;top:461.6px" width="6" height="8" viewBox="0 0 6 8"><path d="M1 0.8 L4.3 4 L1 7.2" fill="none" stroke="#6b7080" stroke-width="1.4"/></svg><div class="a" style="left:103.40px;top:461.10px;line-height:0"><svg width="15" height="10" viewBox="0 0 15 10"><path d="M0.7 0.7 L14.4 0.7 L13.5 4.0 L9.9 4.4 L8.3 9.0 L4.3 9.0 Z" fill="#12a5ec" stroke="#0a0a0a" stroke-width="1.2" stroke-linejoin="round"/><path d="M3.1 5.4 L9.8 5.4 L9.3 6.9 L3.6 6.9 Z" fill="#f4ee10"/></svg></div><div class="t" style="left:124.10px;top:460.60px;font-size:10.8px;color:#1a1a1a">730</div><div class="a" style="left:0;top:492.30px;width:14.50px;height:1px;background:#a9aeb6"></div><div class="a" style="left:120.10px;top:492.30px;width:67.90px;height:1px;background:#e3e5e8"></div><div class="a" style="left:120.10px;top:474.55px;width:1px;height:18.25px;background:#eceef0"></div><svg style="position:absolute;left:90.19999999999999px;top:479.85px" width="6" height="8" viewBox="0 0 6 8"><path d="M1 0.8 L4.3 4 L1 7.2" fill="none" stroke="#6b7080" stroke-width="1.4"/></svg><div class="a" style="left:103.40px;top:479.35px;line-height:0"><svg width="15" height="10" viewBox="0 0 15 10"><path d="M0.7 0.7 L14.4 0.7 L13.5 4.0 L9.9 4.4 L8.3 9.0 L4.3 9.0 Z" fill="#12a5ec" stroke="#0a0a0a" stroke-width="1.2" stroke-linejoin="round"/><path d="M3.1 5.4 L9.8 5.4 L9.3 6.9 L3.6 6.9 Z" fill="#f4ee10"/></svg></div><div class="t" style="left:124.10px;top:478.85px;font-size:10.8px;color:#1a1a1a">720</div><div class="a" style="left:0;top:510.55px;width:14.50px;height:1px;background:#a9aeb6"></div><div class="a" style="left:120.10px;top:510.55px;width:67.90px;height:1px;background:#e3e5e8"></div><div class="a" style="left:120.10px;top:492.80px;width:1px;height:18.25px;background:#eceef0"></div><svg style="position:absolute;left:90.19999999999999px;top:498.09999999999997px" width="6" height="8" viewBox="0 0 6 8"><path d="M1 0.8 L4.3 4 L1 7.2" fill="none" stroke="#6b7080" stroke-width="1.4"/></svg><div class="a" style="left:103.40px;top:497.60px;line-height:0"><svg width="15" height="10" viewBox="0 0 15 10"><path d="M0.7 0.7 L14.4 0.7 L13.5 4.0 L9.9 4.4 L8.3 9.0 L4.3 9.0 Z" fill="#12a5ec" stroke="#0a0a0a" stroke-width="1.2" stroke-linejoin="round"/><path d="M3.1 5.4 L9.8 5.4 L9.3 6.9 L3.6 6.9 Z" fill="#f4ee10"/></svg></div><div class="t" style="left:124.10px;top:497.10px;font-size:10.8px;color:#1a1a1a">710</div><div class="a" style="left:0;top:528.80px;width:14.50px;height:1px;background:#a9aeb6"></div><div class="a" style="left:120.10px;top:528.80px;width:67.90px;height:1px;background:#e3e5e8"></div><div class="a" style="left:120.10px;top:511.05px;width:1px;height:18.25px;background:#eceef0"></div><svg style="position:absolute;left:90.19999999999999px;top:516.3499999999999px" width="6" height="8" viewBox="0 0 6 8"><path d="M1 0.8 L4.3 4 L1 7.2" fill="none" stroke="#6b7080" stroke-width="1.4"/></svg><div class="a" style="left:103.40px;top:515.85px;line-height:0"><svg width="15" height="10" viewBox="0 0 15 10"><path d="M0.7 0.7 L14.4 0.7 L13.5 4.0 L9.9 4.4 L8.3 9.0 L4.3 9.0 Z" fill="#12a5ec" stroke="#0a0a0a" stroke-width="1.2" stroke-linejoin="round"/><path d="M3.1 5.4 L9.8 5.4 L9.3 6.9 L3.6 6.9 Z" fill="#f4ee10"/></svg></div><div class="t" style="left:124.10px;top:515.35px;font-size:10.8px;color:#1a1a1a">700</div><div class="a" style="left:0;top:547.05px;width:14.50px;height:1px;background:#a9aeb6"></div><div class="a" style="left:120.10px;top:547.05px;width:67.90px;height:1px;background:#e3e5e8"></div><div class="a" style="left:120.10px;top:529.30px;width:1px;height:18.25px;background:#eceef0"></div><svg style="position:absolute;left:90.19999999999999px;top:534.5999999999999px" width="6" height="8" viewBox="0 0 6 8"><path d="M1 0.8 L4.3 4 L1 7.2" fill="none" stroke="#6b7080" stroke-width="1.4"/></svg><div class="a" style="left:103.40px;top:534.10px;line-height:0"><svg width="15" height="10" viewBox="0 0 15 10"><path d="M0.7 0.7 L14.4 0.7 L13.5 4.0 L9.9 4.4 L8.3 9.0 L4.3 9.0 Z" fill="#12a5ec" stroke="#0a0a0a" stroke-width="1.2" stroke-linejoin="round"/><path d="M3.1 5.4 L9.8 5.4 L9.3 6.9 L3.6 6.9 Z" fill="#f4ee10"/></svg></div><div class="t" style="left:124.10px;top:533.60px;font-size:10.8px;color:#1a1a1a">690</div><div class="a" style="left:0;top:565.30px;width:14.50px;height:1px;background:#a9aeb6"></div><div class="a" style="left:120.10px;top:565.30px;width:67.90px;height:1px;background:#e3e5e8"></div><div class="a" style="left:120.10px;top:547.55px;width:1px;height:18.25px;background:#eceef0"></div><svg style="position:absolute;left:90.19999999999999px;top:552.8499999999999px" width="6" height="8" viewBox="0 0 6 8"><path d="M1 0.8 L4.3 4 L1 7.2" fill="none" stroke="#6b7080" stroke-width="1.4"/></svg><div class="a" style="left:103.40px;top:552.35px;line-height:0"><svg width="15" height="10" viewBox="0 0 15 10"><path d="M0.7 0.7 L14.4 0.7 L13.5 4.0 L9.9 4.4 L8.3 9.0 L4.3 9.0 Z" fill="#12a5ec" stroke="#0a0a0a" stroke-width="1.2" stroke-linejoin="round"/><path d="M3.1 5.4 L9.8 5.4 L9.3 6.9 L3.6 6.9 Z" fill="#f4ee10"/></svg></div><div class="t" style="left:124.10px;top:551.85px;font-size:10.8px;color:#1a1a1a">680</div><div class="a" style="left:0;top:583.55px;width:14.50px;height:1px;background:#a9aeb6"></div><div class="a" style="left:120.10px;top:583.55px;width:67.90px;height:1px;background:#e3e5e8"></div><div class="a" style="left:120.10px;top:565.80px;width:1px;height:18.25px;background:#eceef0"></div><svg style="position:absolute;left:90.19999999999999px;top:571.0999999999999px" width="6" height="8" viewBox="0 0 6 8"><path d="M1 0.8 L4.3 4 L1 7.2" fill="none" stroke="#6b7080" stroke-width="1.4"/></svg><div class="a" style="left:103.40px;top:570.60px;line-height:0"><svg width="15" height="10" viewBox="0 0 15 10"><path d="M0.7 0.7 L14.4 0.7 L13.5 4.0 L9.9 4.4 L8.3 9.0 L4.3 9.0 Z" fill="#12a5ec" stroke="#0a0a0a" stroke-width="1.2" stroke-linejoin="round"/><path d="M3.1 5.4 L9.8 5.4 L9.3 6.9 L3.6 6.9 Z" fill="#f4ee10"/></svg></div><div class="t" style="left:124.10px;top:570.10px;font-size:10.8px;color:#1a1a1a">670</div><div class="a" style="left:0;top:601.80px;width:14.50px;height:1px;background:#a9aeb6"></div><div class="a" style="left:120.10px;top:601.80px;width:67.90px;height:1px;background:#e3e5e8"></div><div class="a" style="left:120.10px;top:584.05px;width:1px;height:18.25px;background:#eceef0"></div><svg style="position:absolute;left:90.19999999999999px;top:589.3499999999999px" width="6" height="8" viewBox="0 0 6 8"><path d="M1 0.8 L4.3 4 L1 7.2" fill="none" stroke="#6b7080" stroke-width="1.4"/></svg><div class="a" style="left:103.40px;top:588.85px;line-height:0"><svg width="15" height="10" viewBox="0 0 15 10"><path d="M0.7 0.7 L14.4 0.7 L13.5 4.0 L9.9 4.4 L8.3 9.0 L4.3 9.0 Z" fill="#12a5ec" stroke="#0a0a0a" stroke-width="1.2" stroke-linejoin="round"/><path d="M3.1 5.4 L9.8 5.4 L9.3 6.9 L3.6 6.9 Z" fill="#f4ee10"/></svg></div><div class="t" style="left:124.10px;top:588.35px;font-size:10.8px;color:#1a1a1a">660</div><div class="a" style="left:0;top:620.05px;width:14.50px;height:1px;background:#a9aeb6"></div><div class="a" style="left:120.10px;top:620.05px;width:67.90px;height:1px;background:#e3e5e8"></div><div class="a" style="left:120.10px;top:602.30px;width:1px;height:18.25px;background:#eceef0"></div><svg style="position:absolute;left:90.19999999999999px;top:607.5999999999999px" width="6" height="8" viewBox="0 0 6 8"><path d="M1 0.8 L4.3 4 L1 7.2" fill="none" stroke="#6b7080" stroke-width="1.4"/></svg><div class="a" style="left:103.40px;top:607.10px;line-height:0"><svg width="15" height="10" viewBox="0 0 15 10"><path d="M0.7 0.7 L14.4 0.7 L13.5 4.0 L9.9 4.4 L8.3 9.0 L4.3 9.0 Z" fill="#12a5ec" stroke="#0a0a0a" stroke-width="1.2" stroke-linejoin="round"/><path d="M3.1 5.4 L9.8 5.4 L9.3 6.9 L3.6 6.9 Z" fill="#f4ee10"/></svg></div><div class="t" style="left:124.10px;top:606.60px;font-size:10.8px;color:#1a1a1a">650</div><div class="a" style="left:0;top:638.30px;width:14.50px;height:1px;background:#a9aeb6"></div><div class="a" style="left:120.10px;top:638.30px;width:67.90px;height:1px;background:#e3e5e8"></div><div class="a" style="left:120.10px;top:620.55px;width:1px;height:18.25px;background:#eceef0"></div><svg style="position:absolute;left:90.19999999999999px;top:625.8499999999999px" width="6" height="8" viewBox="0 0 6 8"><path d="M1 0.8 L4.3 4 L1 7.2" fill="none" stroke="#6b7080" stroke-width="1.4"/></svg><div class="a" style="left:103.40px;top:625.35px;line-height:0"><svg width="15" height="10" viewBox="0 0 15 10"><path d="M0.7 0.7 L14.4 0.7 L13.5 4.0 L9.9 4.4 L8.3 9.0 L4.3 9.0 Z" fill="#12a5ec" stroke="#0a0a0a" stroke-width="1.2" stroke-linejoin="round"/><path d="M3.1 5.4 L9.8 5.4 L9.3 6.9 L3.6 6.9 Z" fill="#f4ee10"/></svg></div><div class="t" style="left:124.10px;top:624.85px;font-size:10.8px;color:#1a1a1a">640</div><div class="a" style="left:188.50px;top:18.80px;width:16px;height:620px;background:linear-gradient(90deg,#e9eaec,#f7f7f8 60%,#f4f4f5)"></div><svg class="a" style="left:192px;top:24.50px" width="9" height="6" viewBox="0 0 9 6"><path d="M0 5.5 L4.5 0.5 L9 5.5 Z" fill="#606060"/></svg><div class="a" style="left:190.30px;top:35.20px;width:13.5px;height:234px;box-sizing:border-box;border:1px solid #c2c5ca;border-radius:2px;background:linear-gradient(90deg,#f3f4f5,#dfe1e4)"></div><div class="a" style="left:193.5px;top:147.60px;width:6.5px;height:8px;background:#c4c7cc"></div><div class="a" style="left:193.5px;top:147.80px;width:6.5px;height:1.2px;background:#8f939a"></div><div class="a" style="left:193.5px;top:149.80px;width:6.5px;height:1.2px;background:#8f939a"></div><div class="a" style="left:193.5px;top:151.80px;width:6.5px;height:1.2px;background:#8f939a"></div><div class="a" style="left:193.5px;top:153.80px;width:6.5px;height:1.2px;background:#8f939a"></div><svg class="a" style="left:192.5px;top:617.00px" width="9" height="6" viewBox="0 0 9 6"><path d="M0 0.5 L4.5 5.5 L9 0.5 Z" fill="#606060"/></svg></div><div class="a" style="left:444.85px;top:335.15px;width:1.5px;height:1.5px;background:#7a8190"></div><div class="a" style="left:444.85px;top:339.05px;width:1.5px;height:1.5px;background:#7a8190"></div><div class="a" style="left:444.85px;top:342.95px;width:1.5px;height:1.5px;background:#7a8190"></div><div class="a" style="left:444.85px;top:346.85px;width:1.5px;height:1.5px;background:#7a8190"></div><div class="a" style="left:450.5px;top:28px;width:742px;height:629px;background:#fff;box-sizing:border-box;border:1px solid #a8aeb6"></div><svg class="a" style="left:0;top:0" width="1200" height="666" viewBox="0 0 1200 666"><defs><pattern id="hx" patternUnits="userSpaceOnUse" x="2.065" y="1.695" width="10.53" height="10.53"><path d="M-1 -1 L11.53 11.53 M11.53 -1 L-1 11.53" stroke="#000" stroke-width="1.1" fill="none"/></pattern><clipPath id="fr"><rect x="463" y="141.5" width="717.5" height="402.5"/></clipPath></defs><rect x="463" y="141.5" width="717.5" height="402.5" fill="#fff" stroke="#b9b9b9" stroke-width="1"/><polygon clip-path="url(#fr)" points="609.4,162.2 1026.88,162.2 1176.9,312.22 1176.9,407.21 1053.61,530.5 582.67,530.5 463,410.83 463,308.6" fill="url(#hx)"/><polygon points="828.8,489.6 815.9,475 799.7,459.7 776.3,436.3 754.6,414.6 733,394.8 721.3,384.5 708.1,371.3 696.1,360.5 681.7,350.9 669.7,342.5 660,335.2 642,323.2 630.5,315 619.7,306 610.7,297 603.5,288 598.1,279.5 593.6,270 590.7,262.5 585.5,248.9 588.5,230 591.5,214.7 594.2,205.3 599.5,199.8 607.8,194.5 625,179.5 655,171.3 686.6,170.2 704.6,172.8 720,177.3 740,181 765,189.3 795,199.8 840.1,219.3 860,229.7 912.3,257.7 928.3,235.2 940.6,243.6 963,260 980.3,275 997.5,290 1015.6,306.5 1029,320.8 1039.4,330 1047.8,342.6 1053.1,357.3 1055.2,372 1055.2,384.7 1052,401.5 1050,409.9 1044.7,430.9 1038.9,442.7 1028.1,454.9 1014.6,468.4 1001.1,481.9 987.6,491.4 971.4,500.8 953.8,510.3 933.5,519.7 920,521.1 906.7,521.6 877.9,520.6 845.6,519 836,501.7" fill="#FFEBCD" stroke="#404040" stroke-width="0.85"/><polygon points="828.8,489.6 815.9,475 799.7,459.7 776.3,436.3 754.6,414.6 733,394.8 721.3,384.5 708.1,371.3 696.1,360.5 681.7,350.9 669.7,342.5 660,335.2 642,323.2 630.5,315 619.7,306 610.7,297 603.5,288 598.1,279.5 593.6,270 590.7,262.5 585.5,248.9 588.5,230 591.5,214.7 594.2,205.3 599.5,199.8 607.8,194.5 625,179.5 655,171.3 686.6,170.2 704.6,172.8 720,177.3 740,181 765,189.3 795,199.8 840.1,219.3 831.1,238 784.6,219.3 748.5,208 720,199.8 704.6,196 684.4,192.3 659.6,193 636.3,199.8 614.5,217 609.5,235 608.3,247.8 617,270 627.8,283.5 636.8,291.6 650,300.6 660,310 680.5,321.4 697.3,332.8 711.7,343.7 730,362.9 742,375 758.2,389.4 774.5,405.6 792.5,421.8 808.7,438.1 824,450 839.6,469.2 841.4,472.2 842.6,493.2" fill="#98FB98" stroke="#404040" stroke-width="0.85"/><polygon points="940.2,244.7 979.8,277.5 959.1,298.2 921,265.5" fill="#87CEEB" stroke="#404040" stroke-width="0.85"/><line x1="606.3" y1="195.3" x2="619.8" y2="211.8" stroke="#404040" stroke-width="0.85"/><line x1="687.4" y1="170.5" x2="684.4" y2="192.3" stroke="#404040" stroke-width="0.85"/><line x1="765" y1="189.3" x2="759" y2="209.5" stroke="#404040" stroke-width="0.85"/><line x1="598.1" y1="279.3" x2="617" y2="271.2" stroke="#404040" stroke-width="0.85"/><line x1="671.5" y1="317.2" x2="660.6" y2="335.2" stroke="#404040" stroke-width="0.85"/><line x1="736.8" y1="368.9" x2="719.5" y2="382.6" stroke="#404040" stroke-width="0.85"/><line x1="790.7" y1="422.7" x2="778.1" y2="437.2" stroke="#404040" stroke-width="0.85"/><line x1="613" y1="224.8" x2="1014" y2="469" stroke="#404040" stroke-width="0.85"/><line x1="806.5" y1="256.5" x2="1051" y2="404" stroke="#404040" stroke-width="0.85"/><line x1="858" y1="461" x2="921" y2="499" stroke="#404040" stroke-width="0.85"/><line x1="749.5" y1="208.3" x2="680.5" y2="321" stroke="#404040" stroke-width="0.85"/><line x1="820.5" y1="234" x2="737.5" y2="369.5" stroke="#404040" stroke-width="0.85"/><line x1="897.5" y1="250" x2="791.5" y2="422" stroke="#404040" stroke-width="0.85"/><line x1="958.5" y1="298" x2="842.2" y2="484" stroke="#404040" stroke-width="0.85"/><line x1="1029.2" y1="320.5" x2="906.7" y2="521.6" stroke="#404040" stroke-width="0.85"/><text x="646.5" y="186.7" font-family="Liberation Sans" font-size="9" fill="#1a1a1a" stroke="#1a1a1a" stroke-width="0.2" text-anchor="middle">28,481 m³</text><text x="724.5" y="191.6" font-family="Liberation Sans" font-size="9" fill="#1a1a1a" stroke="#1a1a1a" stroke-width="0.2" text-anchor="middle">28,599 m³</text><text x="800" y="215.79999999999998" font-family="Liberation Sans" font-size="9" fill="#1a1a1a" stroke="#1a1a1a" stroke-width="0.2" text-anchor="middle">28,598 m³</text><text x="602.4" y="240.5" font-family="Liberation Sans" font-size="9" fill="#1a1a1a" stroke="#1a1a1a" stroke-width="0.2" text-anchor="middle">28,242 m³</text><text x="681" y="232.0" font-family="Liberation Sans" font-size="9" fill="#1a1a1a" stroke="#1a1a1a" stroke-width="0.2" text-anchor="middle">126,416 m³</text><text x="763" y="266.4" font-family="Liberation Sans" font-size="9" fill="#1a1a1a" stroke="#1a1a1a" stroke-width="0.2" text-anchor="middle">125,638 m³</text><text x="853.5" y="257.7" font-family="Liberation Sans" font-size="9" fill="#1a1a1a" stroke="#1a1a1a" stroke-width="0.2" text-anchor="middle">60,984 m³</text><text x="950" y="273.4" font-family="Liberation Sans" font-size="9" fill="#1a1a1a" stroke="#1a1a1a" stroke-width="0.2" text-anchor="middle">16,956 m³</text><text x="656" y="282.2" font-family="Liberation Sans" font-size="9" fill="#1a1a1a" stroke="#1a1a1a" stroke-width="0.2" text-anchor="middle">77,499 m³</text><text x="634" y="306.8" font-family="Liberation Sans" font-size="9" fill="#1a1a1a" stroke="#1a1a1a" stroke-width="0.2" text-anchor="middle">28,357 m³</text><text x="923" y="300.7" font-family="Liberation Sans" font-size="9" fill="#1a1a1a" stroke="#1a1a1a" stroke-width="0.2" text-anchor="middle">65,749 m³</text><text x="982.6" y="321.2" font-family="Liberation Sans" font-size="9" fill="#1a1a1a" stroke="#1a1a1a" stroke-width="0.2" text-anchor="middle">86,355 m³</text><text x="723" y="327.8" font-family="Liberation Sans" font-size="9" fill="#1a1a1a" stroke="#1a1a1a" stroke-width="0.2" text-anchor="middle">69,792 m³</text><text x="820" y="309.59999999999997" font-family="Liberation Sans" font-size="9" fill="#1a1a1a" stroke="#1a1a1a" stroke-width="0.2" text-anchor="middle">99,966 m³</text><text x="697" y="350.5" font-family="Liberation Sans" font-size="9" fill="#1a1a1a" stroke="#1a1a1a" stroke-width="0.2" text-anchor="middle">28,833 m³</text><text x="883" y="348.3" font-family="Liberation Sans" font-size="9" fill="#1a1a1a" stroke="#1a1a1a" stroke-width="0.2" text-anchor="middle">99,173 m³</text><text x="1028" y="358.8" font-family="Liberation Sans" font-size="9" fill="#1a1a1a" stroke="#1a1a1a" stroke-width="0.2" text-anchor="middle">43,282 m³</text><text x="784.2" y="375.59999999999997" font-family="Liberation Sans" font-size="9" fill="#1a1a1a" stroke="#1a1a1a" stroke-width="0.2" text-anchor="middle">91,728 m³</text><text x="946.8" y="386.8" font-family="Liberation Sans" font-size="9" fill="#1a1a1a" stroke="#1a1a1a" stroke-width="0.2" text-anchor="middle">98,754 m³</text><text x="754.7" y="407.2" font-family="Liberation Sans" font-size="9" fill="#1a1a1a" stroke="#1a1a1a" stroke-width="0.2" text-anchor="middle">28,789 m³</text><text x="1007" y="423.2" font-family="Liberation Sans" font-size="9" fill="#1a1a1a" stroke="#1a1a1a" stroke-width="0.2" text-anchor="middle">87,620 m³</text><text x="845.1" y="426.09999999999997" font-family="Liberation Sans" font-size="9" fill="#1a1a1a" stroke="#1a1a1a" stroke-width="0.2" text-anchor="middle">112,176 m³</text><text x="908.8" y="451.2" font-family="Liberation Sans" font-size="9" fill="#1a1a1a" stroke="#1a1a1a" stroke-width="0.2" text-anchor="middle">99,180 m³</text><text x="810.2" y="456.8" font-family="Liberation Sans" font-size="9" fill="#1a1a1a" stroke="#1a1a1a" stroke-width="0.2" text-anchor="middle">28,436 m³</text><text x="962" y="475.2" font-family="Liberation Sans" font-size="9" fill="#1a1a1a" stroke="#1a1a1a" stroke-width="0.2" text-anchor="middle">71,670 m³</text><text x="871.2" y="497.59999999999997" font-family="Liberation Sans" font-size="9" fill="#1a1a1a" stroke="#1a1a1a" stroke-width="0.2" text-anchor="middle">57,231 m³</text><text x="710.5" y="155.2" font-family="Liberation Sans" font-weight="bold" font-size="14.5" fill="#000" stroke="#000" stroke-width="0.3" textLength="220" lengthAdjust="spacingAndGlyphs">Reserves/M1/P1/P101/770</text><rect x="478.20" y="534" width="16.29" height="1.8" fill="#3a3a3a"/><rect x="478.20" y="535.8" width="16.29" height="1.8" fill="#e8e8e8"/><rect x="494.49" y="534" width="16.29" height="1.8" fill="#e8e8e8"/><rect x="494.49" y="535.8" width="16.29" height="1.8" fill="#3a3a3a"/><rect x="510.77" y="534" width="16.29" height="1.8" fill="#3a3a3a"/><rect x="510.77" y="535.8" width="16.29" height="1.8" fill="#e8e8e8"/><rect x="527.06" y="534" width="16.29" height="1.8" fill="#e8e8e8"/><rect x="527.06" y="535.8" width="16.29" height="1.8" fill="#3a3a3a"/><rect x="543.34" y="534" width="16.29" height="1.8" fill="#3a3a3a"/><rect x="543.34" y="535.8" width="16.29" height="1.8" fill="#e8e8e8"/><rect x="559.63" y="534" width="16.29" height="1.8" fill="#e8e8e8"/><rect x="559.63" y="535.8" width="16.29" height="1.8" fill="#3a3a3a"/><rect x="575.91" y="534" width="16.29" height="1.8" fill="#3a3a3a"/><rect x="575.91" y="535.8" width="16.29" height="1.8" fill="#e8e8e8"/><rect x="592.20" y="534" width="16.29" height="1.8" fill="#e8e8e8"/><rect x="592.20" y="535.8" width="16.29" height="1.8" fill="#3a3a3a"/><rect x="608.49" y="534" width="16.29" height="1.8" fill="#3a3a3a"/><rect x="608.49" y="535.8" width="16.29" height="1.8" fill="#e8e8e8"/><rect x="624.77" y="534" width="16.29" height="1.8" fill="#e8e8e8"/><rect x="624.77" y="535.8" width="16.29" height="1.8" fill="#3a3a3a"/><rect x="641.06" y="534" width="16.29" height="1.8" fill="#3a3a3a"/><rect x="641.06" y="535.8" width="16.29" height="1.8" fill="#e8e8e8"/><rect x="657.34" y="534" width="16.29" height="1.8" fill="#e8e8e8"/><rect x="657.34" y="535.8" width="16.29" height="1.8" fill="#3a3a3a"/><rect x="673.63" y="534" width="16.29" height="1.8" fill="#3a3a3a"/><rect x="673.63" y="535.8" width="16.29" height="1.8" fill="#e8e8e8"/><rect x="689.91" y="534" width="16.29" height="1.8" fill="#e8e8e8"/><rect x="689.91" y="535.8" width="16.29" height="1.8" fill="#3a3a3a"/><rect x="706.20" y="534" width="16.29" height="1.8" fill="#3a3a3a"/><rect x="706.20" y="535.8" width="16.29" height="1.8" fill="#e8e8e8"/><rect x="722.49" y="534" width="16.29" height="1.8" fill="#e8e8e8"/><rect x="722.49" y="535.8" width="16.29" height="1.8" fill="#3a3a3a"/><rect x="738.77" y="534" width="16.29" height="1.8" fill="#3a3a3a"/><rect x="738.77" y="535.8" width="16.29" height="1.8" fill="#e8e8e8"/><rect x="755.06" y="534" width="16.29" height="1.8" fill="#e8e8e8"/><rect x="755.06" y="535.8" width="16.29" height="1.8" fill="#3a3a3a"/><rect x="771.34" y="534" width="16.29" height="1.8" fill="#3a3a3a"/><rect x="771.34" y="535.8" width="16.29" height="1.8" fill="#e8e8e8"/><rect x="787.63" y="534" width="16.29" height="1.8" fill="#e8e8e8"/><rect x="787.63" y="535.8" width="16.29" height="1.8" fill="#3a3a3a"/><rect x="803.91" y="534" width="16.29" height="1.8" fill="#3a3a3a"/><rect x="803.91" y="535.8" width="16.29" height="1.8" fill="#e8e8e8"/><rect x="820.20" y="534" width="16.29" height="1.8" fill="#e8e8e8"/><rect x="820.20" y="535.8" width="16.29" height="1.8" fill="#3a3a3a"/><rect x="836.49" y="534" width="16.29" height="1.8" fill="#3a3a3a"/><rect x="836.49" y="535.8" width="16.29" height="1.8" fill="#e8e8e8"/><rect x="852.77" y="534" width="16.29" height="1.8" fill="#e8e8e8"/><rect x="852.77" y="535.8" width="16.29" height="1.8" fill="#3a3a3a"/><rect x="869.06" y="534" width="16.29" height="1.8" fill="#3a3a3a"/><rect x="869.06" y="535.8" width="16.29" height="1.8" fill="#e8e8e8"/><rect x="885.34" y="534" width="16.29" height="1.8" fill="#e8e8e8"/><rect x="885.34" y="535.8" width="16.29" height="1.8" fill="#3a3a3a"/><rect x="901.63" y="534" width="16.29" height="1.8" fill="#3a3a3a"/><rect x="901.63" y="535.8" width="16.29" height="1.8" fill="#e8e8e8"/><rect x="917.91" y="534" width="16.29" height="1.8" fill="#e8e8e8"/><rect x="917.91" y="535.8" width="16.29" height="1.8" fill="#3a3a3a"/><rect x="934.20" y="534" width="16.29" height="1.8" fill="#3a3a3a"/><rect x="934.20" y="535.8" width="16.29" height="1.8" fill="#e8e8e8"/><rect x="950.49" y="534" width="16.29" height="1.8" fill="#e8e8e8"/><rect x="950.49" y="535.8" width="16.29" height="1.8" fill="#3a3a3a"/><rect x="966.77" y="534" width="16.29" height="1.8" fill="#3a3a3a"/><rect x="966.77" y="535.8" width="16.29" height="1.8" fill="#e8e8e8"/><rect x="983.06" y="534" width="16.29" height="1.8" fill="#e8e8e8"/><rect x="983.06" y="535.8" width="16.29" height="1.8" fill="#3a3a3a"/><rect x="999.34" y="534" width="16.29" height="1.8" fill="#3a3a3a"/><rect x="999.34" y="535.8" width="16.29" height="1.8" fill="#e8e8e8"/><rect x="1015.63" y="534" width="16.29" height="1.8" fill="#e8e8e8"/><rect x="1015.63" y="535.8" width="16.29" height="1.8" fill="#3a3a3a"/><rect x="1031.91" y="534" width="16.29" height="1.8" fill="#3a3a3a"/><rect x="1031.91" y="535.8" width="16.29" height="1.8" fill="#e8e8e8"/><rect x="1048.20" y="534" width="16.29" height="1.8" fill="#e8e8e8"/><rect x="1048.20" y="535.8" width="16.29" height="1.8" fill="#3a3a3a"/><rect x="1064.49" y="534" width="16.29" height="1.8" fill="#3a3a3a"/><rect x="1064.49" y="535.8" width="16.29" height="1.8" fill="#e8e8e8"/><rect x="1080.77" y="534" width="16.29" height="1.8" fill="#e8e8e8"/><rect x="1080.77" y="535.8" width="16.29" height="1.8" fill="#3a3a3a"/><rect x="1097.06" y="534" width="16.29" height="1.8" fill="#3a3a3a"/><rect x="1097.06" y="535.8" width="16.29" height="1.8" fill="#e8e8e8"/><rect x="1113.34" y="534" width="16.29" height="1.8" fill="#e8e8e8"/><rect x="1113.34" y="535.8" width="16.29" height="1.8" fill="#3a3a3a"/><rect x="1129.63" y="534" width="16.29" height="1.8" fill="#3a3a3a"/><rect x="1129.63" y="535.8" width="16.29" height="1.8" fill="#e8e8e8"/><rect x="1145.91" y="534" width="16.29" height="1.8" fill="#e8e8e8"/><rect x="1145.91" y="535.8" width="16.29" height="1.8" fill="#3a3a3a"/><rect x="478.2" y="533.5" width="684" height="4.5" fill="none" stroke="#c8c8c8" stroke-width="0.5"/><text x="478.20" y="542.5" font-family="Liberation Sans" font-size="3.9" fill="#555" text-anchor="middle">0</text><text x="494.49" y="542.5" font-family="Liberation Sans" font-size="3.9" fill="#555" text-anchor="middle">20</text><text x="510.77" y="542.5" font-family="Liberation Sans" font-size="3.9" fill="#555" text-anchor="middle">40</text><text x="527.06" y="542.5" font-family="Liberation Sans" font-size="3.9" fill="#555" text-anchor="middle">60</text><text x="543.34" y="542.5" font-family="Liberation Sans" font-size="3.9" fill="#555" text-anchor="middle">80</text><text x="559.63" y="542.5" font-family="Liberation Sans" font-size="3.9" fill="#555" text-anchor="middle">100</text><text x="575.91" y="542.5" font-family="Liberation Sans" font-size="3.9" fill="#555" text-anchor="middle">120</text><text x="592.20" y="542.5" font-family="Liberation Sans" font-size="3.9" fill="#555" text-anchor="middle">140</text><text x="608.49" y="542.5" font-family="Liberation Sans" font-size="3.9" fill="#555" text-anchor="middle">160</text><text x="624.77" y="542.5" font-family="Liberation Sans" font-size="3.9" fill="#555" text-anchor="middle">180</text><text x="641.06" y="542.5" font-family="Liberation Sans" font-size="3.9" fill="#555" text-anchor="middle">200</text><text x="657.34" y="542.5" font-family="Liberation Sans" font-size="3.9" fill="#555" text-anchor="middle">220</text><text x="673.63" y="542.5" font-family="Liberation Sans" font-size="3.9" fill="#555" text-anchor="middle">240</text><text x="689.91" y="542.5" font-family="Liberation Sans" font-size="3.9" fill="#555" text-anchor="middle">260</text><text x="706.20" y="542.5" font-family="Liberation Sans" font-size="3.9" fill="#555" text-anchor="middle">280</text><text x="722.49" y="542.5" font-family="Liberation Sans" font-size="3.9" fill="#555" text-anchor="middle">300</text><text x="738.77" y="542.5" font-family="Liberation Sans" font-size="3.9" fill="#555" text-anchor="middle">320</text><text x="755.06" y="542.5" font-family="Liberation Sans" font-size="3.9" fill="#555" text-anchor="middle">340</text><text x="771.34" y="542.5" font-family="Liberation Sans" font-size="3.9" fill="#555" text-anchor="middle">360</text><text x="787.63" y="542.5" font-family="Liberation Sans" font-size="3.9" fill="#555" text-anchor="middle">380</text><text x="803.91" y="542.5" font-family="Liberation Sans" font-size="3.9" fill="#555" text-anchor="middle">400</text><text x="820.20" y="542.5" font-family="Liberation Sans" font-size="3.9" fill="#555" text-anchor="middle">420</text><text x="836.49" y="542.5" font-family="Liberation Sans" font-size="3.9" fill="#555" text-anchor="middle">440</text><text x="852.77" y="542.5" font-family="Liberation Sans" font-size="3.9" fill="#555" text-anchor="middle">460</text><text x="869.06" y="542.5" font-family="Liberation Sans" font-size="3.9" fill="#555" text-anchor="middle">480</text><text x="885.34" y="542.5" font-family="Liberation Sans" font-size="3.9" fill="#555" text-anchor="middle">500</text><text x="901.63" y="542.5" font-family="Liberation Sans" font-size="3.9" fill="#555" text-anchor="middle">520</text><text x="917.91" y="542.5" font-family="Liberation Sans" font-size="3.9" fill="#555" text-anchor="middle">540</text><text x="934.20" y="542.5" font-family="Liberation Sans" font-size="3.9" fill="#555" text-anchor="middle">560</text><text x="950.49" y="542.5" font-family="Liberation Sans" font-size="3.9" fill="#555" text-anchor="middle">580</text><text x="966.77" y="542.5" font-family="Liberation Sans" font-size="3.9" fill="#555" text-anchor="middle">600</text><text x="983.06" y="542.5" font-family="Liberation Sans" font-size="3.9" fill="#555" text-anchor="middle">620</text><text x="999.34" y="542.5" font-family="Liberation Sans" font-size="3.9" fill="#555" text-anchor="middle">640</text><text x="1015.63" y="542.5" font-family="Liberation Sans" font-size="3.9" fill="#555" text-anchor="middle">660</text><text x="1031.91" y="542.5" font-family="Liberation Sans" font-size="3.9" fill="#555" text-anchor="middle">680</text><text x="1048.20" y="542.5" font-family="Liberation Sans" font-size="3.9" fill="#555" text-anchor="middle">700</text><text x="1064.49" y="542.5" font-family="Liberation Sans" font-size="3.9" fill="#555" text-anchor="middle">720</text><text x="1080.77" y="542.5" font-family="Liberation Sans" font-size="3.9" fill="#555" text-anchor="middle">740</text><text x="1097.06" y="542.5" font-family="Liberation Sans" font-size="3.9" fill="#555" text-anchor="middle">760</text><text x="1113.34" y="542.5" font-family="Liberation Sans" font-size="3.9" fill="#555" text-anchor="middle">780</text><text x="1129.63" y="542.5" font-family="Liberation Sans" font-size="3.9" fill="#555" text-anchor="middle">800</text><text x="1145.91" y="542.5" font-family="Liberation Sans" font-size="3.9" fill="#555" text-anchor="middle">820</text><text x="1162.20" y="542.5" font-family="Liberation Sans" font-size="3.9" fill="#555" text-anchor="middle">840</text></svg></body></html>
